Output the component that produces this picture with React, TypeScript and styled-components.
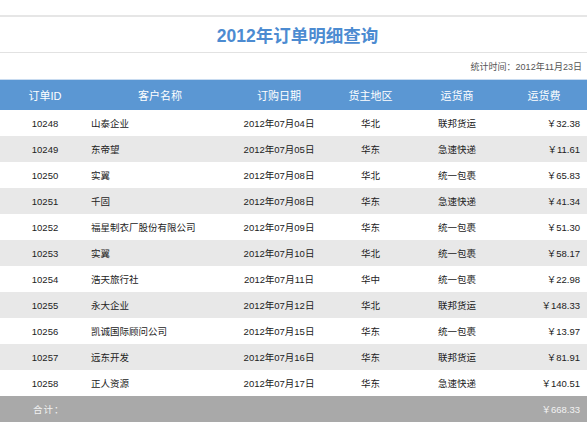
import React from "react";
import styled, { createGlobalStyle } from "styled-components";

const Global = createGlobalStyle`
  html, body { margin: 0; padding: 0; background: #fff; }
  body { font-family: "Liberation Sans", Arial, "Noto Sans CJK SC", sans-serif; }
`;

const Page = styled.div`
  width: 587px;
  padding-top: 15px;
`;

const TitleBar = styled.div`
  height: 35px;
  border-top: 2px solid #e6e6e6;
  border-bottom: 1px solid #e2e2e2;
  display: flex;
  align-items: center;
  justify-content: center;
  padding-left: 8px;
`;

const Title = styled.h1`
  margin: 0;
  font-size: 17.5px;
  font-weight: bold;
  color: #4c8bd1;
  letter-spacing: 0;
`;

const Stat = styled.div`
  height: 26px;
  display: flex;
  align-items: center;
  justify-content: flex-end;
  padding-right: 5px;
  font-size: 9px;
  color: #555;
`;

const cols = "90px 140px 98px 85px 88px 86px";

const HeaderRow = styled.div`
  display: grid;
  grid-template-columns: ${cols};
  height: 31px;
  align-items: center;
  background: #5b97d3;
  border-top: 1px solid #c8dbf0;
  box-sizing: border-box;
  color: #fff;
  font-size: 11px;
`;

const HeadCell = styled.div`
  text-align: center;
`;

const Row = styled.div<{ $alt?: boolean }>`
  display: grid;
  grid-template-columns: ${cols};
  height: 26px;
  align-items: center;
  background: ${(p) => (p.$alt ? "#e8e8e8" : "#fff")};
  color: #222;
  font-size: 9.5px;
`;

const Cell = styled.div<{ $align?: "left" | "center" | "right" }>`
  text-align: ${(p) => p.$align ?? "center"};
  padding-left: ${(p) => (p.$align === "left" ? "1px" : "0")};
  padding-right: ${(p) => (p.$align === "right" ? "7px" : "0")};
  white-space: nowrap;
`;

const TotalRow = styled.div`
  display: grid;
  grid-template-columns: ${cols};
  height: 26px;
  align-items: center;
  background: #a9a9a9;
  color: #f2f2f2;
  font-size: 9.5px;
`;

const TotalLabel = styled.div`
  grid-column: 1 / 2;
  padding-left: 33px;
  letter-spacing: 1px;
`;

const TotalValue = styled.div`
  grid-column: 6 / 7;
  text-align: right;
  padding-right: 7px;
`;

const data: [string, string, string, string, string, string][] = [
  ["10248", "山泰企业", "2012年07月04日", "华北", "联邦货运", "￥32.38"],
  ["10249", "东帝望", "2012年07月05日", "华东", "急速快递", "￥11.61"],
  ["10250", "实翼", "2012年07月08日", "华北", "统一包裹", "￥65.83"],
  ["10251", "千固", "2012年07月08日", "华东", "急速快递", "￥41.34"],
  ["10252", "福星制衣厂股份有限公司", "2012年07月09日", "华东", "统一包裹", "￥51.30"],
  ["10253", "实翼", "2012年07月10日", "华北", "统一包裹", "￥58.17"],
  ["10254", "浩天旅行社", "2012年07月11日", "华中", "统一包裹", "￥22.98"],
  ["10255", "永大企业", "2012年07月12日", "华北", "联邦货运", "￥148.33"],
  ["10256", "凯诚国际顾问公司", "2012年07月15日", "华东", "统一包裹", "￥13.97"],
  ["10257", "远东开发", "2012年07月16日", "华东", "联邦货运", "￥81.91"],
  ["10258", "正人资源", "2012年07月17日", "华东", "急速快递", "￥140.51"],
];

const headers = ["订单ID", "客户名称", "订购日期", "货主地区", "运货商", "运货费"];

export default function App() {
  return (
    <Page>
      <Global />
      <TitleBar>
        <Title>2012年订单明细查询</Title>
      </TitleBar>
      <Stat>统计时间：2012年11月23日</Stat>
      <HeaderRow>
        {headers.map((h) => (
          <HeadCell key={h}>{h}</HeadCell>
        ))}
      </HeaderRow>
      {data.map((r, i) => (
        <Row key={r[0]} $alt={i % 2 === 1}>
          <Cell>{r[0]}</Cell>
          <Cell $align="left">{r[1]}</Cell>
          <Cell>{r[2]}</Cell>
          <Cell>{r[3]}</Cell>
          <Cell>{r[4]}</Cell>
          <Cell $align="right">{r[5]}</Cell>
        </Row>
      ))}
      <TotalRow>
        <TotalLabel>合计：</TotalLabel>
        <TotalValue>￥668.33</TotalValue>
      </TotalRow>
    </Page>
  );
}
